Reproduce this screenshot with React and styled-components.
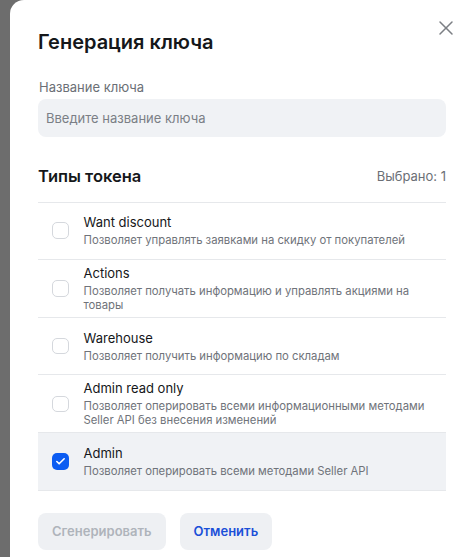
import { useState } from "react";
import styled, { createGlobalStyle } from "styled-components";
import { X, Check } from "lucide-react";

const GlobalStyle = createGlobalStyle`
  html, body {
    margin: 0;
    padding: 0;
    background: #6d6d6d;
    font-family: Inter, "Noto Sans", sans-serif;
    -webkit-font-smoothing: antialiased;
  }
`;

const Page = styled.div`
  height: 557px;
  overflow: hidden;
  padding-left: 10px;
  box-sizing: border-box;
`;

const Modal = styled.div`
  position: relative;
  width: 464px;
  height: 557px;
  background: #ffffff;
  border-top-left-radius: 14px;
  box-sizing: border-box;
  padding: 29px 28px 0 28px;
  display: flex;
  flex-direction: column;
`;

const Title = styled.h1`
  margin: 0;
  font-size: 20px;
  line-height: 26px;
  font-weight: 600;
  color: #15171a;
`;

const CloseButton = styled.button`
  position: absolute;
  top: 16px;
  right: 16px;
  width: 24px;
  height: 24px;
  padding: 0;
  border: none;
  background: transparent;
  color: #7c7f84;
  display: flex;
  align-items: center;
  justify-content: center;
  cursor: pointer;
`;

const Field = styled.label`
  display: flex;
  flex-direction: column;
  gap: 3px;
  margin-top: 23px;
`;

const FieldLabel = styled.span`
  font-size: 13px;
  line-height: 18px;
  color: #6b6f76;
  padding-left: 1px;
`;

const TextInput = styled.input`
  height: 37.5px;
  border: none;
  border-radius: 8px;
  background: #f0f2f5;
  padding: 0 8px;
  font-family: inherit;
  font-size: 13px;
  color: #15171a;
  outline: none;

  &::placeholder {
    color: #7b7f86;
  }
`;

const SectionHeader = styled.div`
  display: flex;
  justify-content: space-between;
  align-items: center;
  margin-top: 28px;
  margin-bottom: 15px;
`;

const SectionTitle = styled.h2`
  margin: 0;
  font-size: 16.5px;
  line-height: 22px;
  font-weight: 600;
  color: #15171a;
`;

const Counter = styled.span`
  font-size: 13px;
  color: #6b6f76;
`;

const List = styled.div`
  display: flex;
  flex-direction: column;
  border-top: 1px solid #e6e8eb;
`;

const Row = styled.div`
  display: flex;
  align-items: center;
  gap: 15px;
  min-height: 57.4px;
  box-sizing: border-box;
  padding: 5px 14px;
  border-bottom: 1px solid #e6e8eb;
  background: ${(props) => (props.selected ? "#f0f2f5" : "transparent")};
  cursor: pointer;
`;

const Box = styled.span`
  flex: none;
  width: 16.5px;
  height: 16.5px;
  box-sizing: border-box;
  border-radius: 5px;
  border: ${(props) => (props.checked ? "none" : "1.5px solid #d5d8dd")};
  background: ${(props) => (props.checked ? "#0b5cf2" : "#ffffff")};
  color: #ffffff;
  display: flex;
  align-items: center;
  justify-content: center;
`;

const RowText = styled.div`
  display: flex;
  flex-direction: column;
  gap: 2px;
`;

const RowTitle = styled.span`
  font-size: 13px;
  line-height: 17px;
  color: #15171a;
`;

const RowDesc = styled.span`
  font-size: 11.3px;
  line-height: 14px;
  color: #6f737a;
`;

const Actions = styled.div`
  display: flex;
  gap: 14px;
  margin-top: 22px;
`;

const Button = styled.button`
  height: 37.5px;
  padding: 0 14px;
  border: none;
  border-radius: 8px;
  background: #eef0f3;
  font-family: inherit;
  font-size: 13px;
  font-weight: 600;
  color: ${(props) => (props.disabled ? "#afb4bb" : "#1a4fd8")};
  cursor: ${(props) => (props.disabled ? "default" : "pointer")};
`;

const tokenTypes = [
  { id: "discount", title: "Want discount", desc: "Позволяет управлять заявками на скидку от покупателей" },
  { id: "actions", title: "Actions", desc: "Позволяет получать информацию и управлять акциями на товары" },
  { id: "warehouse", title: "Warehouse", desc: "Позволяет получить информацию по складам" },
  { id: "readonly", title: "Admin read only", desc: "Позволяет оперировать всеми информационными методами Seller API без внесения изменений" },
  { id: "admin", title: "Admin", desc: "Позволяет оперировать всеми методами Seller API" },
];

export default function App() {
  const [name, setName] = useState("");
  const [selected, setSelected] = useState(["admin"]);

  const toggle = (id) => {
    setSelected((prev) => (prev.includes(id) ? prev.filter((x) => x !== id) : [...prev, id]));
  };

  return (
    <Page>
      <GlobalStyle />
      <Modal>
        <Title>Генерация ключа</Title>
        <CloseButton aria-label="Закрыть">
          <X size={24} strokeWidth={1.5} />
        </CloseButton>

        <Field>
          <FieldLabel>Название ключа</FieldLabel>
          <TextInput
            placeholder="Введите название ключа"
            value={name}
            onChange={(e) => setName(e.target.value)}
          />
        </Field>

        <SectionHeader>
          <SectionTitle>Типы токена</SectionTitle>
          <Counter>Выбрано: {selected.length}</Counter>
        </SectionHeader>

        <List>
          {tokenTypes.map((t) => {
            const checked = selected.includes(t.id);
            return (
              <Row key={t.id} selected={checked} onClick={() => toggle(t.id)}>
                <Box checked={checked}>{checked && <Check size={11} strokeWidth={3.5} />}</Box>
                <RowText>
                  <RowTitle>{t.title}</RowTitle>
                  <RowDesc>{t.desc}</RowDesc>
                </RowText>
              </Row>
            );
          })}
        </List>

        <Actions>
          <Button disabled={!name.trim()}>Сгенерировать</Button>
          <Button>Отменить</Button>
        </Actions>
      </Modal>
    </Page>
  );
}
